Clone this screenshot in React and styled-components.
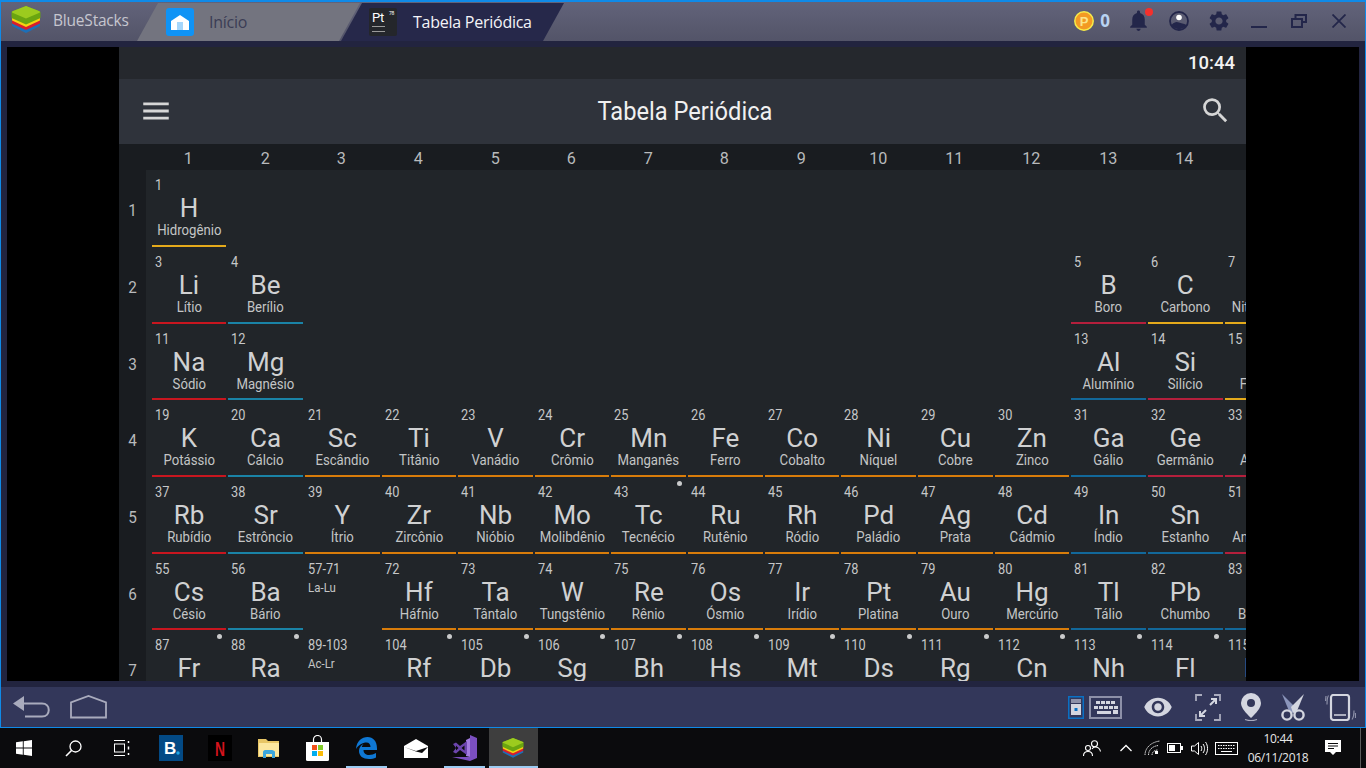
import React from 'react';
import styled, { createGlobalStyle } from 'styled-components';
import { MdMenu, MdSearch, MdNotifications, MdSettings, MdVisibility } from 'react-icons/md';

const GlobalStyle = createGlobalStyle`
  html, body { margin: 0; padding: 0; background: #000; }
  * { box-sizing: border-box; }
`;

const RED = '#c8161f';
const TEAL = '#1a83a6';
const YELLOW = '#e4aa1b';
const ORANGE = '#d87c0a';
const BLUE = '#12689a';
const CRIMSON = '#b41f3c';

// [number, symbol, name, column, line colour, radioactive dot]
const ROWS = [
  [[1, 'H', 'Hidrogênio', 1, YELLOW]],
  [
    [3, 'Li', 'Lítio', 1, RED], [4, 'Be', 'Berílio', 2, TEAL],
    [5, 'B', 'Boro', 13, CRIMSON], [6, 'C', 'Carbono', 14, YELLOW], [7, 'N', 'Nitrogênio', 15, YELLOW],
  ],
  [
    [11, 'Na', 'Sódio', 1, RED], [12, 'Mg', 'Magnésio', 2, TEAL],
    [13, 'Al', 'Alumínio', 13, BLUE], [14, 'Si', 'Silício', 14, CRIMSON], [15, 'P', 'Fósforo', 15, YELLOW],
  ],
  [
    [19, 'K', 'Potássio', 1, RED], [20, 'Ca', 'Cálcio', 2, TEAL], [21, 'Sc', 'Escândio', 3, ORANGE],
    [22, 'Ti', 'Titânio', 4, ORANGE], [23, 'V', 'Vanádio', 5, ORANGE], [24, 'Cr', 'Crômio', 6, ORANGE],
    [25, 'Mn', 'Manganês', 7, ORANGE], [26, 'Fe', 'Ferro', 8, ORANGE], [27, 'Co', 'Cobalto', 9, ORANGE],
    [28, 'Ni', 'Níquel', 10, ORANGE], [29, 'Cu', 'Cobre', 11, ORANGE], [30, 'Zn', 'Zinco', 12, ORANGE],
    [31, 'Ga', 'Gálio', 13, BLUE], [32, 'Ge', 'Germânio', 14, CRIMSON], [33, 'As', 'Arsênio', 15, CRIMSON],
  ],
  [
    [37, 'Rb', 'Rubídio', 1, RED], [38, 'Sr', 'Estrôncio', 2, TEAL], [39, 'Y', 'Ítrio', 3, ORANGE],
    [40, 'Zr', 'Zircônio', 4, ORANGE], [41, 'Nb', 'Nióbio', 5, ORANGE], [42, 'Mo', 'Molibdênio', 6, ORANGE],
    [43, 'Tc', 'Tecnécio', 7, ORANGE, true], [44, 'Ru', 'Rutênio', 8, ORANGE], [45, 'Rh', 'Ródio', 9, ORANGE],
    [46, 'Pd', 'Paládio', 10, ORANGE], [47, 'Ag', 'Prata', 11, ORANGE], [48, 'Cd', 'Cádmio', 12, ORANGE],
    [49, 'In', 'Índio', 13, BLUE], [50, 'Sn', 'Estanho', 14, BLUE], [51, 'Sb', 'Antimônio', 15, CRIMSON],
  ],
  [
    [55, 'Cs', 'Césio', 1, RED], [56, 'Ba', 'Bário', 2, TEAL], ['57-71', null, 'La-Lu', 3],
    [72, 'Hf', 'Háfnio', 4, ORANGE], [73, 'Ta', 'Tântalo', 5, ORANGE], [74, 'W', 'Tungstênio', 6, ORANGE],
    [75, 'Re', 'Rênio', 7, ORANGE], [76, 'Os', 'Ósmio', 8, ORANGE], [77, 'Ir', 'Irídio', 9, ORANGE],
    [78, 'Pt', 'Platina', 10, ORANGE], [79, 'Au', 'Ouro', 11, ORANGE], [80, 'Hg', 'Mercúrio', 12, ORANGE],
    [81, 'Tl', 'Tálio', 13, BLUE], [82, 'Pb', 'Chumbo', 14, BLUE], [83, 'Bi', 'Bismuto', 15, BLUE],
  ],
  [
    [87, 'Fr', 'Frâncio', 1, RED, true], [88, 'Ra', 'Rádio', 2, TEAL, true], ['89-103', null, 'Ac-Lr', 3],
    [104, 'Rf', 'Rutherfórdio', 4, ORANGE, true], [105, 'Db', 'Dúbnio', 5, ORANGE, true],
    [106, 'Sg', 'Seabórgio', 6, ORANGE, true], [107, 'Bh', 'Bóhrio', 7, ORANGE, true],
    [108, 'Hs', 'Hássio', 8, ORANGE, true], [109, 'Mt', 'Meitnério', 9, ORANGE, true],
    [110, 'Ds', 'Darmstádio', 10, ORANGE, true], [111, 'Rg', 'Roentgênio', 11, ORANGE, true],
    [112, 'Cn', 'Copernício', 12, ORANGE, true], [113, 'Nh', 'Nihônio', 13, BLUE, true],
    [114, 'Fl', 'Fleróvio', 14, BLUE, true], [115, 'Mc', 'Moscóvio', 15, BLUE, true],
  ],
];

const Screen = styled.div`
  width: 1366px;
  height: 768px;
  display: flex;
  flex-direction: column;
  overflow: hidden;
  font-family: Roboto, sans-serif;
`;

const Window = styled.div`
  height: 728px;
  display: flex;
  flex-direction: column;
  background: #22243f;
  border: 1px solid #0f8ae8;
  border-top-width: 2px;
`;

const TitleBar = styled.header`
  height: 39px;
  flex: none;
  display: flex;
  align-items: flex-end;
  background: linear-gradient(#62637a, #535468);
  font-family: "Open Sans", sans-serif;
`;

const Brand = styled.div`
  width: 136px;
  height: 39px;
  flex: none;
  display: flex;
  align-items: center;
  gap: 12px;
  padding: 0 0 3px 10px;
  font-size: 15.5px;
  letter-spacing: -0.2px;
  color: #c6c6cf;
`;

const Tab = styled.div`
  width: 223px;
  height: 38px;
  flex: none;
  margin-left: ${(p) => (p.$active ? '-19px' : '0')};
  display: flex;
  align-items: center;
  padding-left: ${(p) => (p.$active ? '28px' : '29px')};
  gap: ${(p) => (p.$active ? '16px' : '15px')};
  clip-path: polygon(21px 0, 100% 0, calc(100% - 21px) 100%, 0 100%);
  background: ${(p) => (p.$active ? '#26284a' : '#73747f')};
  color: ${(p) => (p.$active ? '#f4f4f8' : '#3b3d55')};
  font-size: 16px;
  letter-spacing: -0.25px;
`;

const AppTile = styled.div`
  width: 28px;
  height: 28px;
  flex: none;
  position: relative;
  background: #24262b;
  border-radius: 2px;
  color: #fff;
  font: 13px/1 Roboto, sans-serif;
  padding: 3px 0 0 3px;
`;

const TileNumber = styled.span`
  position: absolute;
  top: 3px;
  right: 3px;
  font-size: 5px;
`;

const TileLine = styled.span`
  position: absolute;
  left: 3px;
  top: ${(p) => p.$top}px;
  width: 13px;
  height: 1px;
  background: #9a9a9a;
`;

const WindowControls = styled.div`
  margin-left: auto;
  height: 39px;
  display: flex;
  align-items: center;
  padding: 0 19px 2px 0;
`;

const ControlSlot = styled.div`
  display: flex;
  align-items: center;
  position: relative;
  margin-left: ${(p) => p.$ml || 0}px;
  color: #23264a;
`;

const CoinCount = styled.span`
  font: 700 17px/1 "Open Sans", sans-serif;
  color: #b9d3f2;
`;

const BellDot = styled.span`
  position: absolute;
  top: 0;
  right: -2px;
  width: 8px;
  height: 8px;
  border-radius: 50%;
  background: #f5302c;
`;

const Frame = styled.div`
  flex: 1;
  min-height: 0;
  padding: 6px 6px;
`;

const Stage = styled.div`
  height: 100%;
  background: #000;
  display: flex;
`;

const Phone = styled.main`
  width: 1127px;
  height: 100%;
  margin-left: 112px;
  display: flex;
  flex-direction: column;
  overflow: hidden;
  background: #212529;
`;

const StatusBar = styled.div`
  height: 32px;
  flex: none;
  display: flex;
  align-items: center;
  justify-content: flex-end;
  padding-right: 11px;
  background: #25282d;
`;

const Clock = styled.span`
  font-size: 18.5px;
  font-weight: 500;
  color: #f2f2f2;
`;

const AppBar = styled.div`
  height: 65px;
  flex: none;
  display: grid;
  grid-template-columns: 1fr auto 1fr;
  align-items: center;
  padding: 0 14px 2px 20px;
  background: #2f333b;
  color: #d6d6d6;
`;

const AppTitle = styled.h1`
  margin: 0;
  font-size: 26px;
  font-weight: 400;
  color: #f0f0f0;
  transform: scaleX(0.91);
  transform-origin: 49% 50%;
`;

const SearchSlot = styled.div`
  justify-self: end;
  display: flex;
`;

const MenuSlot = styled.div`
  display: flex;
`;

const ColumnHeader = styled.div`
  height: 26px;
  flex: none;
  display: grid;
  grid-template-columns: repeat(14, 74.65px);
  column-gap: 2px;
  padding: 2px 0 0 32px;
  align-items: center;
  background: #191c20;
  overflow: hidden;
`;

const HeaderLabel = styled.span`
  font-size: 17px;
  color: #b8babc;
  text-align: center;
  transform: scaleX(0.95);
`;

const TableBody = styled.div`
  flex: 1;
  min-height: 0;
  display: flex;
  overflow: hidden;
`;

const RowHeader = styled.div`
  width: 27px;
  flex: none;
  display: flex;
  flex-direction: column;
  gap: 2px;
  padding-top: 3px;
  background: #191c20;
`;

const RowLabel = styled.span`
  height: 74.65px;
  flex: none;
  display: flex;
  align-items: center;
  justify-content: center;
  font-size: 17px;
  color: #b8babc;
  transform: scaleX(0.9);
`;

const ElementGrid = styled.div`
  flex: 1;
  min-width: 0;
  display: grid;
  grid-template-columns: repeat(18, 74.65px);
  grid-auto-rows: 74.65px;
  gap: 2px;
  padding: 2.35px 0 0 5.65px;
  align-content: start;
  overflow: hidden;
`;

const Cell = styled.div`
  grid-column: ${(p) => p.$col};
  grid-row: ${(p) => p.$row};
  position: relative;
  border-bottom: 2px solid ${(p) => p.$line || 'transparent'};
  padding-top: 5px;
  text-align: center;
  color: #d0d1d2;
`;

const ElementNumber = styled.div`
  height: 16px;
  padding-left: 3.5px;
  font-size: 14.5px;
  line-height: 18px;
  text-align: left;
  color: #c6c7c8;
  transform: scaleX(0.88);
  transform-origin: left;
`;

const ElementSymbol = styled.div`
  height: 29px;
  font-size: 26px;
  line-height: 31px;
  white-space: nowrap;
`;

const ElementName = styled.div`
  font-size: 14px;
  line-height: 16px;
  white-space: nowrap;
  color: #c4c5c6;
  transform: scaleX(0.94);
`;

const SeriesRange = styled.div`
  margin-top: 4px;
  padding-left: 3.5px;
  font-size: 13px;
  line-height: 14px;
  text-align: left;
  color: #c4c5c6;
  transform: scaleX(0.88);
  transform-origin: left;
`;

const Dot = styled.span`
  position: absolute;
  top: 2px;
  right: 4px;
  width: 5px;
  height: 5px;
  border-radius: 50%;
  background: #c9cacb;
`;

const NavBar = styled.nav`
  height: 40px;
  flex: none;
  display: flex;
  align-items: center;
  justify-content: space-between;
  padding: 0 9px 0 11px;
  background: #33375a;
`;

const NavGroup = styled.div`
  display: flex;
  align-items: center;
`;

const NavItem = styled.div`
  display: flex;
  margin-left: ${(p) => p.$ml || 0}px;
`;

const Taskbar = styled.footer`
  height: 40px;
  flex: none;
  display: flex;
  background: #0b0b0d;
  color: #fff;
  font-family: "Open Sans", sans-serif;
`;

const TaskSlot = styled.div`
  width: 48.9px;
  flex: none;
  position: relative;
  display: flex;
  align-items: center;
  justify-content: center;
  background: ${(p) => (p.$active ? '#3e3e3e' : 'transparent')};
  &::after {
    content: '';
    display: ${(p) => (p.$open ? 'block' : 'none')};
    position: absolute;
    bottom: 0;
    left: ${(p) => (p.$active ? '0' : '4px')};
    right: ${(p) => (p.$active ? '0' : '4px')};
    height: 2px;
    background: #9ccbf2;
  }
`;

const Tray = styled.div`
  margin-left: auto;
  display: flex;
  padding-right: 5px;
`;

const TraySlot = styled.div`
  width: ${(p) => p.$w}px;
  display: flex;
  align-items: center;
  justify-content: center;
`;

const TrayClock = styled.div`
  width: 74px;
  text-align: center;
  font-size: 12px;
  line-height: 19px;
  letter-spacing: -0.3px;
  color: #e8e8e8;
  padding-top: 1px;
`;

const DesktopEdge = styled.div`
  width: 10px;
  border-right: 1px solid #5a5a5a;
`;

function BlueStacksLogo({ size = 30 }) {
  return (
    <svg width={size} height={size * 0.93} viewBox="0 0 30 28">
      <path d="M15 11 29 17v3l-14 7-14-7v-3z" fill="#1d6fb8" />
      <path d="M15 8 29 14.5v3L15 24 1 17.5v-3z" fill="#d81e2c" />
      <path d="M15 5 29 11.5v3L15 21 1 14.5v-3z" fill="#f4d312" />
      <path d="M15 0 28 5c1.5.6 1.5 1 1.5 2v5L15 18.5.5 12V7c0-1 0-1.4 1.5-2z" fill="#6aa510" />
      <path d="M15 0 28 5c1.5.6 1.5 1.4 0 2L15 12.5 2 7C.5 6.4.5 5.6 2 5z" fill="#9ccb1e" />
    </svg>
  );
}

function HomeTile() {
  return (
    <svg width="28" height="28" viewBox="0 0 28 28">
      <rect width="28" height="28" rx="3" fill="#0f93f5" />
      <path d="M5 13 14 7l9 6v9H5z" fill="#fff" />
      <rect x="11" y="14" width="6" height="8" fill="#a5d6fb" />
    </svg>
  );
}

function Coin() {
  return (
    <svg width="20" height="20" viewBox="0 0 20 20">
      <circle cx="10" cy="10" r="9.2" fill="#f39a23" stroke="#f7ec4a" strokeWidth="1.5" />
      <text x="10" y="14.5" textAnchor="middle" fontSize="13" fontWeight="700" fontFamily="Liberation Sans, sans-serif" fill="#fbe58a">P</text>
    </svg>
  );
}

function Profile() {
  return (
    <svg width="20" height="20" viewBox="0 0 20 20">
      <circle cx="10" cy="10" r="9" fill="none" stroke="currentColor" strokeWidth="1.8" />
      <path d="M2.5 14c3-3.4 5.5-3.4 7.5-2.4s4.500 1 7.500 2.400a8.800 8.800 0 0 1-15 0z" fill="currentColor" />
      <circle cx="10" cy="6.500" r="2.800" fill="#fff" />
    </svg>
  );
}

function Minimize() {
  return <svg width="16" height="16" viewBox="0 0 16 16"><rect y="13" width="16" height="2" fill="currentColor" /></svg>;
}

function Restore() {
  return (
    <svg width="16" height="14" viewBox="0 0 16 14" fill="none" stroke="currentColor" strokeWidth="2">
      <rect x="1" y="5" width="10" height="8" />
      <path d="M4.500 4.500V1H15v7h-3.500" />
    </svg>
  );
}

function CloseX() {
  return (
    <svg width="14" height="14" viewBox="0 0 14 14" stroke="currentColor" strokeWidth="1.800">
      <path d="M0.500 0.500 13.500 13.500M13.500 0.500 0.500 13.500" />
    </svg>
  );
}

const NAV = '#a9abbd';

function BackIcon() {
  return (
    <svg width="38" height="24" viewBox="0 0 38 24" fill="none">
      <path d="M1 8.500 12 1v15z" fill={NAV} />
      <path d="M11 8.500h19c9 0 9 13 0 13H13" stroke={NAV} strokeWidth="2" />
    </svg>
  );
}

function HomeIcon() {
  return (
    <svg width="37" height="24" viewBox="0 0 37 24" fill="none">
      <path d="M1 22.500V7.500L18.500 1 36 7.500v15z" stroke={NAV} strokeWidth="1.800" />
    </svg>
  );
}

function LockIcon() {
  return (
    <svg width="16" height="23" viewBox="0 0 16 23">
      <rect x="0.750" y="0.750" width="14.500" height="21.500" fill="none" stroke="#0a70c4" strokeWidth="1.500" />
      <rect x="3" y="3" width="10" height="4" fill="#8d90a8" />
      <rect x="3" y="8" width="10" height="11" fill="#d4d6e0" />
      <rect x="6.500" y="12" width="3" height="3" fill="#0a70c4" />
    </svg>
  );
}

function KeyboardIcon() {
  const keys = [];
  for (let i = 0; i < 4; i += 1) keys.push(<rect key={`a${i}`} x={7 + i * 5} y="5" width="4" height="3" />);
  for (let i = 0; i < 5; i += 1) keys.push(<rect key={`b${i}`} x={5 + i * 5} y="10" width="4" height="3" />);
  keys.push(<rect key="c" x="8" y="15" width="14" height="3" />);
  keys.push(<rect key="d" x="24" y="14" width="5" height="4" />);
  return (
    <svg width="33" height="23" viewBox="0 0 33 23" fill="#d4d6e0">
      <rect x="1" y="1" width="31" height="21" fill="none" stroke="#8d90a8" strokeWidth="2" />
      {keys}
    </svg>
  );
}

function ExpandIcon() {
  return (
    <svg width="26" height="27" viewBox="0 0 26 27" fill="none" stroke="#d4d6e0" strokeWidth="1.800">
      <path d="M1 7V1h6M19 1h6v6M25 20v6h-6M7 26H1v-6" stroke="#a9abbd" />
      <path d="M15 11 21 5M16 5h5v5M11 16l-6 6M5 17v5h5" strokeWidth="2" />
    </svg>
  );
}

function PinIcon() {
  return (
    <svg width="20" height="28" viewBox="0 0 20 28">
      <path d="M10 0a10 10 0 0 1 10 10c0 5-5 10-10 15C5 20 0 15 0 10A10 10 0 0 1 10 0z" fill="#d4d6e0" />
      <circle cx="10" cy="10" r="4" fill="#33375a" />
      <path d="M4 26.500c4 1.500 8 1.500 12 0" stroke="#a9abbd" fill="none" strokeWidth="1.200" />
    </svg>
  );
}

function ScissorsIcon() {
  return (
    <svg width="24" height="27" viewBox="0 0 24 27" fill="none">
      <path d="M1 0 14 13l-2 6-4-2z" fill="#8b95bb" />
      <path d="M23 0 10 13l2 6 4-2z" fill="#d4d6e0" />
      <circle cx="6" cy="21" r="4.600" stroke="#d4d6e0" strokeWidth="2.400" />
      <circle cx="18" cy="21" r="4.600" stroke="#d4d6e0" strokeWidth="2.400" />
    </svg>
  );
}

function RotateIcon() {
  return (
    <svg width="31" height="27" viewBox="0 0 31 27" fill="none">
      <rect x="6" y="1" width="18" height="25" rx="2.500" stroke="#d4d6e0" strokeWidth="2.200" />
      <path d="M9 21h12" stroke="#d4d6e0" strokeWidth="1.500" />
      <path d="M3.500 1.500c-1.500 2-1.500 6-1.500 9M1 2 .5 7M27 25.500c1.500-2 2-6 2-9M30.500 24l0-5" stroke="#8d90a8" strokeWidth="1.200" />
    </svg>
  );
}

function WindowsIcon() {
  return (
    <svg width="16" height="16" viewBox="0 0 16 16" fill="#fff">
      <path d="M0 2.300 6.800 1.300V7.600H0zM7.700 1.200 16 0v7.600H7.700zM0 8.500h6.800v6.300L0 13.800zM7.700 8.500H16V16l-8.300-1.200z" />
    </svg>
  );
}

function SearchGlass() {
  return (
    <svg width="17" height="17" viewBox="0 0 17 17" fill="none" stroke="#fff" strokeWidth="1.300">
      <circle cx="10.500" cy="6.500" r="5.500" />
      <path d="M6.500 10.500 1 16" strokeWidth="1.600" />
    </svg>
  );
}

function TaskView() {
  return (
    <svg width="16" height="16" viewBox="0 0 16 16" fill="none" stroke="#fff">
      <path d="M0 .5h11M0 15.500h11" />
      <rect x=".5" y="4" width="10" height="8" />
      <path d="M14.500 1v2M14.500 6.500v3M14.500 13v2" strokeWidth="1.500" />
    </svg>
  );
}

function BookingIcon() {
  return (
    <svg width="24" height="26" viewBox="0 0 24 26">
      <rect width="24" height="26" fill="#034a85" />
      <text x="5" y="19" fontSize="17" fontWeight="700" fontFamily="Liberation Sans, sans-serif" fill="#fff">B</text>
      <circle cx="19" cy="18" r="1.700" fill="#1fa5e5" />
    </svg>
  );
}

function NetflixIcon() {
  return (
    <svg width="24" height="26" viewBox="0 0 24 26">
      <rect width="24" height="26" fill="#000" />
      <text x="12" y="21" textAnchor="middle" fontSize="21" fontWeight="700" fontFamily="Liberation Sans, sans-serif" fill="#d3131c" textLength="10" lengthAdjust="spacingAndGlyphs">N</text>
    </svg>
  );
}

function ExplorerIcon() {
  return (
    <svg width="22" height="20" viewBox="0 0 22 20">
      <path d="M0 1h8l2 2h11v16H0z" fill="#e8c666" />
      <path d="M1 5h20v13H1z" fill="#fce79f" />
      <path d="M5 20V14c0-1 1-2 2-2h7c1 0 3 1 3 2v6h-3v-4H8v4z" fill="#3ca6dd" />
    </svg>
  );
}

function StoreIcon() {
  return (
    <svg width="23" height="26" viewBox="0 0 23 26">
      <path d="M7.500 7V4.500a4 4 0 0 1 8 0V7" fill="none" stroke="#fff" strokeWidth="1.200" />
      <path d="M0 7h23v17.500a1.500 1.500 0 0 1-1.500 1.500h-20A1.500 1.500 0 0 1 0 24.500z" fill="#fff" />
      <rect x="6" y="10" width="5" height="5" fill="#f1511b" />
      <rect x="12" y="10" width="5" height="5" fill="#80cc28" />
      <rect x="6" y="16" width="5" height="5" fill="#00adef" />
      <rect x="12" y="16" width="5" height="5" fill="#fbbc09" />
    </svg>
  );
}

function EdgeIcon() {
  return (
    <svg width="21" height="22" viewBox="0 0 21 22">
      <path d="M0 12C.5 4 6 0 11.500 0 17 0 21 4 21 11.500v1.500H7.500c0 3.500 2.500 5 5.500 5 2.500 0 5-.7 7-2v4.500c-2 1.200-4.500 1.500-7 1.500C7 22 3 19 3 14c0-3 1.500-5.500 4.500-7-1 1-1.500 2-1.800 3h8.800c0-2.500-1.500-4.500-4-4.500C6.500 5.500 2.500 8 0 12z" fill="#0f78d4" />
    </svg>
  );
}

function MailIcon() {
  return (
    <svg width="24" height="19" viewBox="0 0 24 19">
      <path d="M0 7 12 0l12 7v12H0z" fill="#fff" />
      <path d="M0 8 12 12 24 8 18 14 12 12.500z" fill="#0b0b0d" />
    </svg>
  );
}

function VsIcon() {
  return (
    <svg width="25" height="26" viewBox="0 0 25 26">
      <path d="M18 0 25 3v20l-7 3L0 22l18 0z" fill="#7b4fc0" />
      <path d="M18 3v19l-4-1V5z" fill="#a37be0" />
      <path d="M1 9l3-1.500L8 11l7-5v14l-7-5-4 3.500L1 17l3-4z M4 10.500v5L6.500 13zM9.500 13l3 2.500v-5z" fill="#6c45ad" fillRule="evenodd" />
    </svg>
  );
}

function PeopleIcon() {
  return (
    <svg width="18" height="17" viewBox="0 0 18 17" fill="none" stroke="#fff" strokeWidth="1.100">
      <circle cx="11.500" cy="3.800" r="3" />
      <circle cx="5" cy="8" r="2.500" />
      <path d="M.5 16c0-3 2-4.500 4.500-4.500S9.500 13 9.500 16M9 9c1-1.500 2-2 3-2 3 0 5 2 5.500 4.500" />
    </svg>
  );
}

function Chevron() {
  return (
    <svg width="12" height="8" viewBox="0 0 12 8" fill="none" stroke="#fff" strokeWidth="1.300">
      <path d="M0.500 7 6 1.500 11.500 7" />
    </svg>
  );
}

function WifiIcon() {
  return (
    <svg width="18" height="16" viewBox="0 0 18 16" fill="none" stroke="#ddd" strokeWidth="1" strokeDasharray="1.500 .7">
      <path d="M1 15C1 8 7 2 16 1M4.500 15c0-5 4-9 10-9.500M8 15c0-2.500 2-5 6-5" />
      <rect x="11" y="11" width="3" height="3" fill="#fff" stroke="none" />
    </svg>
  );
}

function BatteryIcon() {
  return (
    <svg width="16" height="10" viewBox="0 0 16 10">
      <rect x=".5" y=".5" width="13" height="9" fill="none" stroke="#fff" />
      <rect x="2" y="2" width="6" height="6" fill="#fff" />
      <rect x="14" y="3" width="2" height="4" fill="#fff" />
    </svg>
  );
}

function VolumeIcon() {
  return (
    <svg width="17" height="15" viewBox="0 0 17 15" fill="none" stroke="#fff">
      <path d="M.5 5h3L7.500 1.500v12L3.500 10h-3z" />
      <path d="M10 5c1 1.500 1 3.500 0 5M12 3c2 2.500 2 6.500 0 9M14.500 1c2.700 3.500 2.700 9.500 0 13" />
    </svg>
  );
}

function KeyboardTray() {
  return (
    <svg width="23" height="13" viewBox="0 0 23 13" fill="none" stroke="#fff">
      <rect x=".5" y=".5" width="22" height="12" />
      <path d="M3 3.500h17M3 6.500h17" strokeDasharray="1.500 1" />
      <path d="M6 9.500h11" />
    </svg>
  );
}

function NotificationIcon() {
  return (
    <svg width="16" height="16" viewBox="0 0 16 16">
      <path d="M0 0h16v12h-5l-3 3-3-3H0z" fill="#fff" />
      <path d="M3 3.500h10M3 6h10M3 8.500h6" stroke="#0b0b0d" />
    </svg>
  );
}

function Element({ data, row }) {
  const [num, sym, name, col, line, dot] = data;
  return (
    <Cell $col={col} $row={row} $line={line}>
      <ElementNumber>{num}</ElementNumber>
      {sym ? (
        <>
          <ElementSymbol>{sym}</ElementSymbol>
          <ElementName>{name}</ElementName>
        </>
      ) : (
        <SeriesRange>{name}</SeriesRange>
      )}
      {dot && <Dot />}
    </Cell>
  );
}

export default function App() {
  return (
    <Screen>
      <GlobalStyle />
      <Window>
        <TitleBar>
          <Brand>
            <BlueStacksLogo />
            BlueStacks
          </Brand>
          <Tab>
            <HomeTile />
            Início
          </Tab>
          <Tab $active>
            <AppTile>
              Pt
              <TileNumber>78</TileNumber>
              <TileLine $top={18} />
              <TileLine $top={23} />
            </AppTile>
            Tabela Periódica
          </Tab>
          <WindowControls>
            <ControlSlot><Coin /></ControlSlot>
            <ControlSlot $ml={6}><CoinCount>0</CoinCount></ControlSlot>
            <ControlSlot $ml={16}>
              <MdNotifications size={25} />
              <BellDot />
            </ControlSlot>
            <ControlSlot $ml={18}><Profile /></ControlSlot>
            <ControlSlot $ml={18}><MdSettings size={24} /></ControlSlot>
            <ControlSlot $ml={20}><Minimize /></ControlSlot>
            <ControlSlot $ml={24}><Restore /></ControlSlot>
            <ControlSlot $ml={25}><CloseX /></ControlSlot>
          </WindowControls>
        </TitleBar>
        <Frame>
          <Stage>
            <Phone>
              <StatusBar><Clock>10:44</Clock></StatusBar>
              <AppBar>
                <MenuSlot><MdMenu size={34} /></MenuSlot>
                <AppTitle>Tabela Periódica</AppTitle>
                <SearchSlot><MdSearch size={33} /></SearchSlot>
              </AppBar>
              <ColumnHeader>
                {Array.from({ length: 14 }, (_, i) => (
                  <HeaderLabel key={i}>{i + 1}</HeaderLabel>
                ))}
              </ColumnHeader>
              <TableBody>
                <RowHeader>
                  {ROWS.map((_, i) => <RowLabel key={i}>{i + 1}</RowLabel>)}
                </RowHeader>
                <ElementGrid>
                  {ROWS.map((cells, r) => cells.map((c) => (
                    <Element key={c[0]} data={c} row={r + 1} />
                  )))}
                </ElementGrid>
              </TableBody>
            </Phone>
          </Stage>
        </Frame>
        <NavBar>
          <NavGroup>
            <NavItem><BackIcon /></NavItem>
            <NavItem $ml={20}><HomeIcon /></NavItem>
          </NavGroup>
          <NavGroup>
            <NavItem><LockIcon /></NavItem>
            <NavItem $ml={5}><KeyboardIcon /></NavItem>
            <NavItem $ml={21}><MdVisibility size={30} color="#d4d6e0" /></NavItem>
            <NavItem $ml={22}><ExpandIcon /></NavItem>
            <NavItem $ml={20}><PinIcon /></NavItem>
            <NavItem $ml={20}><ScissorsIcon /></NavItem>
            <NavItem $ml={20}><RotateIcon /></NavItem>
          </NavGroup>
        </NavBar>
      </Window>
      <Taskbar>
        <TaskSlot><WindowsIcon /></TaskSlot>
        <TaskSlot><SearchGlass /></TaskSlot>
        <TaskSlot><TaskView /></TaskSlot>
        <TaskSlot><BookingIcon /></TaskSlot>
        <TaskSlot><NetflixIcon /></TaskSlot>
        <TaskSlot><ExplorerIcon /></TaskSlot>
        <TaskSlot><StoreIcon /></TaskSlot>
        <TaskSlot $open><EdgeIcon /></TaskSlot>
        <TaskSlot><MailIcon /></TaskSlot>
        <TaskSlot $open><VsIcon /></TaskSlot>
        <TaskSlot $open $active><BlueStacksLogo size={22} /></TaskSlot>
        <Tray>
          <TraySlot $w={34}><PeopleIcon /></TraySlot>
          <TraySlot $w={33}><Chevron /></TraySlot>
          <TraySlot $w={21}><WifiIcon /></TraySlot>
          <TraySlot $w={24}><BatteryIcon /></TraySlot>
          <TraySlot $w={25}><VolumeIcon /></TraySlot>
          <TraySlot $w={29}><KeyboardTray /></TraySlot>
          <TrayClock>10:44<br />06/11/2018</TrayClock>
          <TraySlot $w={36}><NotificationIcon /></TraySlot>
          <DesktopEdge />
        </Tray>
      </Taskbar>
    </Screen>
  );
}
